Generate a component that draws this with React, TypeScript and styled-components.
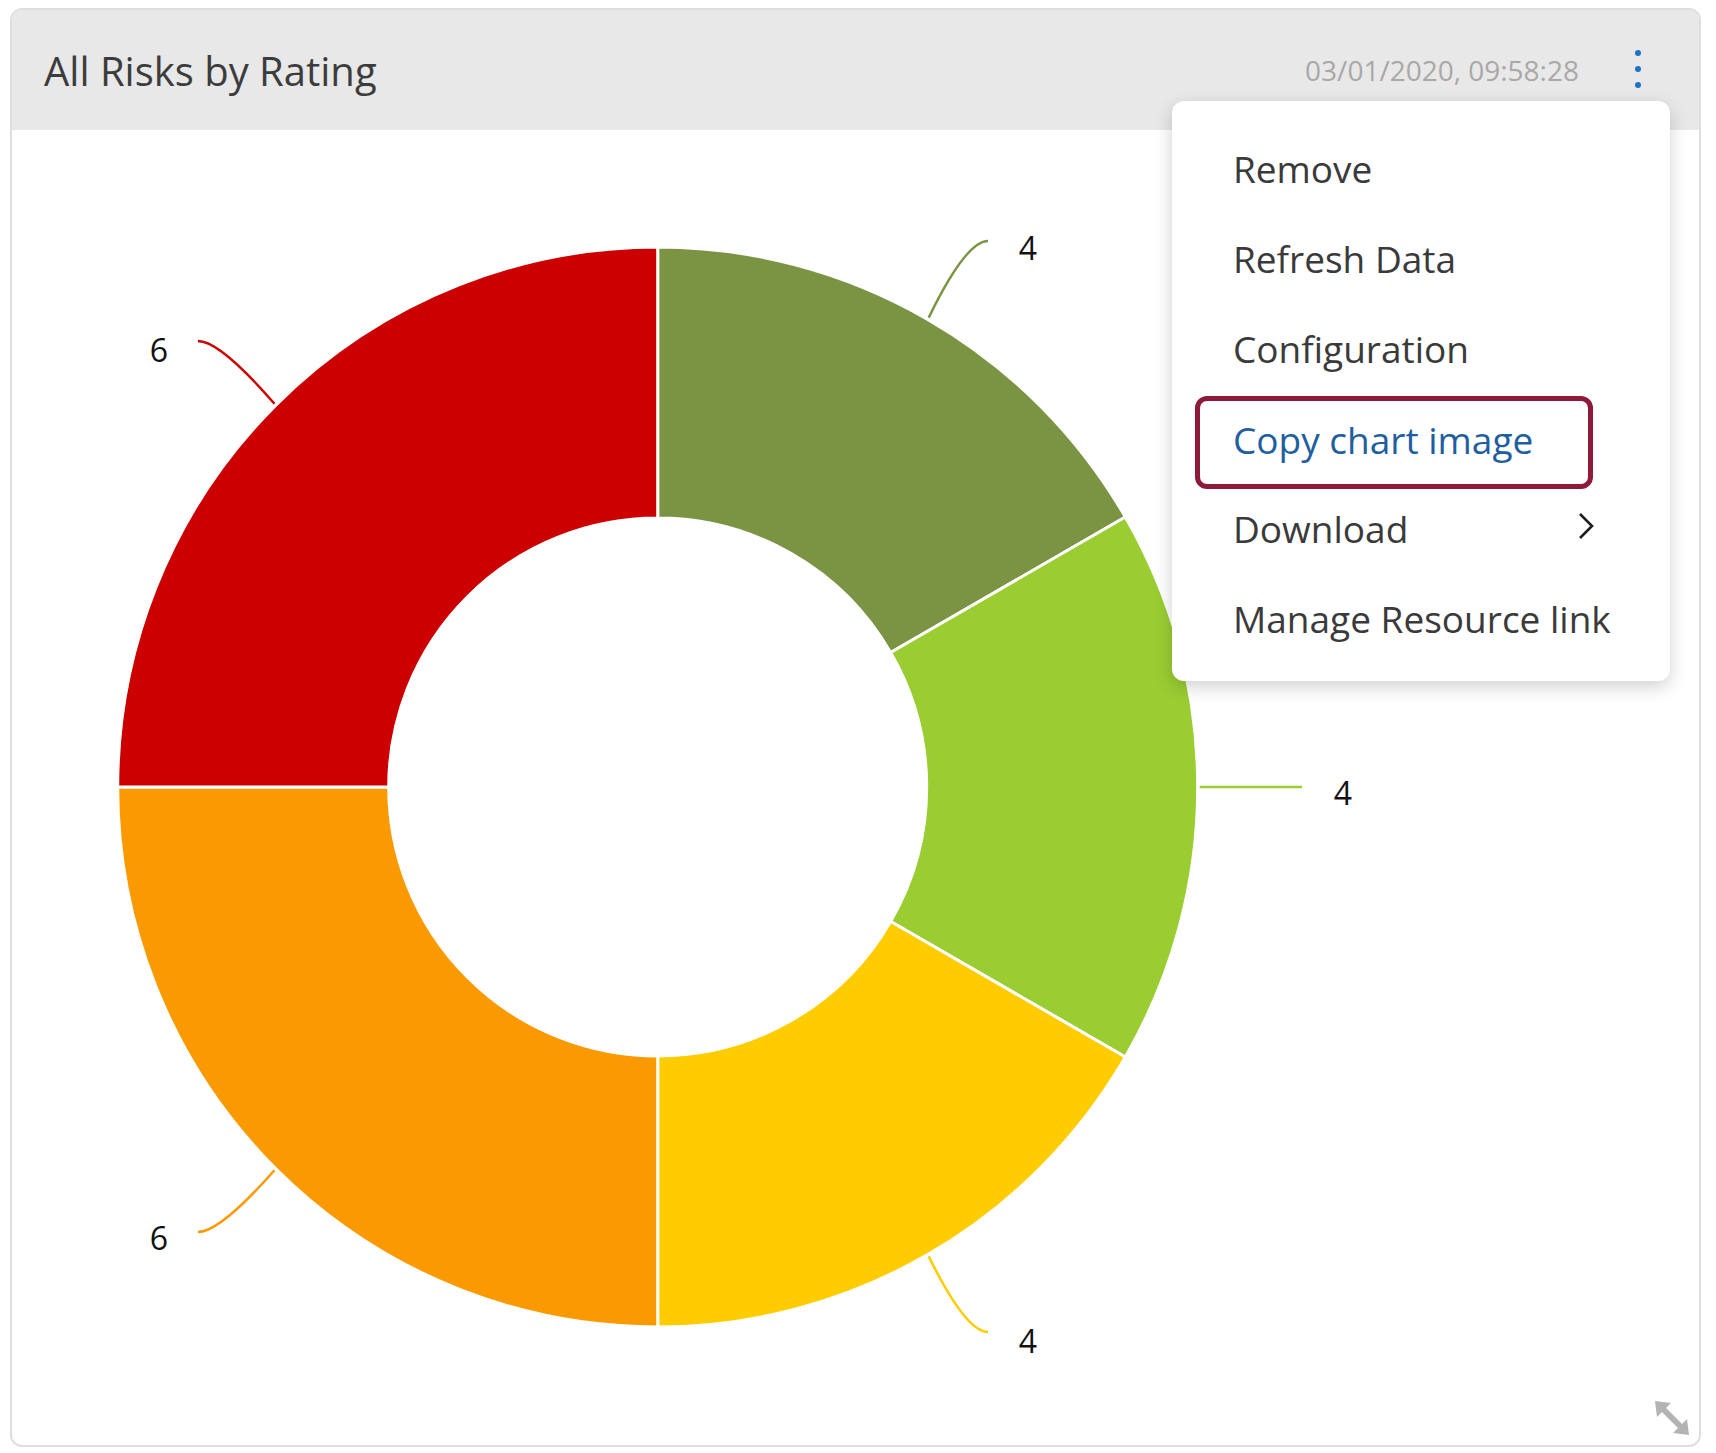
import styled, { createGlobalStyle } from 'styled-components';

const GlobalStyle = createGlobalStyle`
  html, body {
    margin: 0;
    padding: 0;
    background: #ffffff;
  }
  body {
    font-family: 'Open Sans', 'Noto Sans', sans-serif;
  }
`;

const Page = styled.div`
  width: 1716px;
  height: 1453px;
  padding: 8px 15px 6px 10px;
  box-sizing: border-box;
`;

const Card = styled.section`
  position: relative;
  height: 100%;
  box-sizing: border-box;
  border: 2px solid #dedede;
  border-radius: 12px;
  background: #ffffff;
  display: flex;
  flex-direction: column;
  overflow: hidden;
`;

const Header = styled.header`
  height: 120px;
  flex: none;
  display: flex;
  align-items: center;
  padding: 0 54px 0 32px;
  background: #e8e8e8;
`;

const Title = styled.h2`
  margin: 0;
  flex: 1;
  font-size: 40px;
  font-weight: 400;
  color: #3c3c3c;
`;

const Stamp = styled.span`
  font-size: 28px;
  color: #a8a8a8;
  margin-right: 52px;
`;

const DotsButton = styled.button`
  display: flex;
  flex-direction: column;
  gap: 10px;
  padding: 4px;
  border: none;
  background: transparent;
  cursor: pointer;
  margin-top: -2px;
`;

const Dot = styled.span`
  width: 6px;
  height: 6px;
  border-radius: 50%;
  background: #1a73c8;
`;

const ChartArea = styled.div`
  flex: 1;
`;

const Menu = styled.ul`
  position: absolute;
  top: 91px;
  left: 1160px;
  width: 498px;
  height: 580px;
  box-sizing: border-box;
  margin: 0;
  padding: 22px 0 18px;
  list-style: none;
  background: #ffffff;
  border-radius: 12px;
  box-shadow: 0 6px 18px rgba(0, 0, 0, 0.18);
`;

const MenuItem = styled.li<{ $active?: boolean }>`
  height: ${(p) => (p.$active ? 93 : 90)}px;
  box-sizing: border-box;
  margin: ${(p) => (p.$active ? '3px 77px -6px 23px' : '0 77px 0 23px')};
  padding: ${(p) => (p.$active ? '0 4px 6px 33px' : '0 4px 0 38px')};
  display: flex;
  align-items: center;
  justify-content: space-between;
  white-space: nowrap;
  font-size: 37px;
  color: ${(p) => (p.$active ? '#1f5e9f' : '#3a3a3a')};
  border: ${(p) => (p.$active ? '5px solid #8d1a38' : 'none')};
  border-radius: 12px;
`;

const Chevron = styled.svg`
  flex: none;
  margin-right: -5px;
  margin-top: -4px;
`;

const ResizeHandle = styled.div`
  position: absolute;
  right: 8px;
  bottom: 8px;
  width: 38px;
  height: 38px;
`;

const cx = 657.7;
const cy = 787;
const R = 540;
const r = 269;

type Slice = {
  value: number;
  color: string;
  end: [number, number];
  label: [number, number];
};

const slices: Slice[] = [
  { value: 4, color: '#7a9444', end: [988, 241], label: [1028, 247] },
  { value: 4, color: '#9acd32', end: [1302, 787], label: [1343, 792] },
  { value: 4, color: '#ffcc00', end: [988, 1332], label: [1028, 1340] },
  { value: 6, color: '#fb9a00', end: [198, 1232], label: [159, 1237] },
  { value: 6, color: '#cc0000', end: [198, 341], label: [159, 349] },
];

const pt = (deg: number, rad: number): [number, number] => {
  const a = (deg * Math.PI) / 180;
  return [cx + rad * Math.sin(a), cy - rad * Math.cos(a)];
};

const arcPath = (start: number, end: number): string => {
  const large = end - start > 180 ? 1 : 0;
  const [x1, y1] = pt(start, R);
  const [x2, y2] = pt(end, R);
  const [x3, y3] = pt(end, r);
  const [x4, y4] = pt(start, r);
  return `M ${x1} ${y1} A ${R} ${R} 0 ${large} 1 ${x2} ${y2} L ${x3} ${y3} A ${r} ${r} 0 ${large} 0 ${x4} ${y4} Z`;
};

const Donut = () => {
  const total = slices.reduce((s, d) => s + d.value, 0);
  let acc = 0;
  return (
    <svg width="1687" height="1315" viewBox="12 130 1687 1315" style={{ display: 'block' }}>
      {slices.map((s, i) => {
        const start = (acc / total) * 360;
        acc += s.value;
        const end = (acc / total) * 360;
        const mid = (start + end) / 2;
        const [ex, ey] = pt(mid, R + 2);
        const [lx, ly] = s.end;
        const left = lx < cx;
        const ctrlX = left ? lx + 22 : lx - 22;
        const line =
          Math.abs(ey - ly) < 2
            ? `M ${ex} ${ey} L ${lx} ${ly}`
            : `M ${ex} ${ey} Q ${ctrlX} ${ly} ${lx} ${ly}`;
        return (
          <g key={i}>
            <path d={arcPath(start, end)} fill={s.color} stroke="#ffffff" strokeWidth="3" strokeLinejoin="round" />
            <path d={line} fill="none" stroke={s.color} strokeWidth="2.5" />
            <text
              x={s.label[0]}
              y={s.label[1]}
              textAnchor="middle"
              dominantBaseline="central"
              fontSize="32"
              fontFamily="'Open Sans', 'Noto Sans', sans-serif"
              fill="#111111"
            >
              {s.value}
            </text>
          </g>
        );
      })}
    </svg>
  );
};

export default function App() {
  return (
    <Page>
      <GlobalStyle />
      <Card>
        <Header>
          <Title>All Risks by Rating</Title>
          <Stamp>03/01/2020, 09:58:28</Stamp>
          <DotsButton aria-label="More options">
            <Dot />
            <Dot />
            <Dot />
          </DotsButton>
        </Header>
        <ChartArea>
          <Donut />
        </ChartArea>
        <Menu>
          <MenuItem>Remove</MenuItem>
          <MenuItem>Refresh Data</MenuItem>
          <MenuItem>Configuration</MenuItem>
          <MenuItem $active>Copy chart image</MenuItem>
          <MenuItem>
            Download
            <Chevron width="16" height="28" viewBox="0 0 16 28">
              <path d="M2 2 L14 14 L2 26" fill="none" stroke="#1e1e1e" strokeWidth="2.6" />
            </Chevron>
          </MenuItem>
          <MenuItem>Manage Resource link</MenuItem>
        </Menu>
        <ResizeHandle>
          <svg width="38" height="38" viewBox="0 0 38 38">
            <line x1="8" y1="8" x2="30" y2="30" stroke="#b3b3b3" strokeWidth="6" />
            <polygon points="2,2 18,4 4,18" fill="#b3b3b3" />
            <polygon points="36,36 20,34 34,20" fill="#b3b3b3" />
          </svg>
        </ResizeHandle>
      </Card>
    </Page>
  );
}
